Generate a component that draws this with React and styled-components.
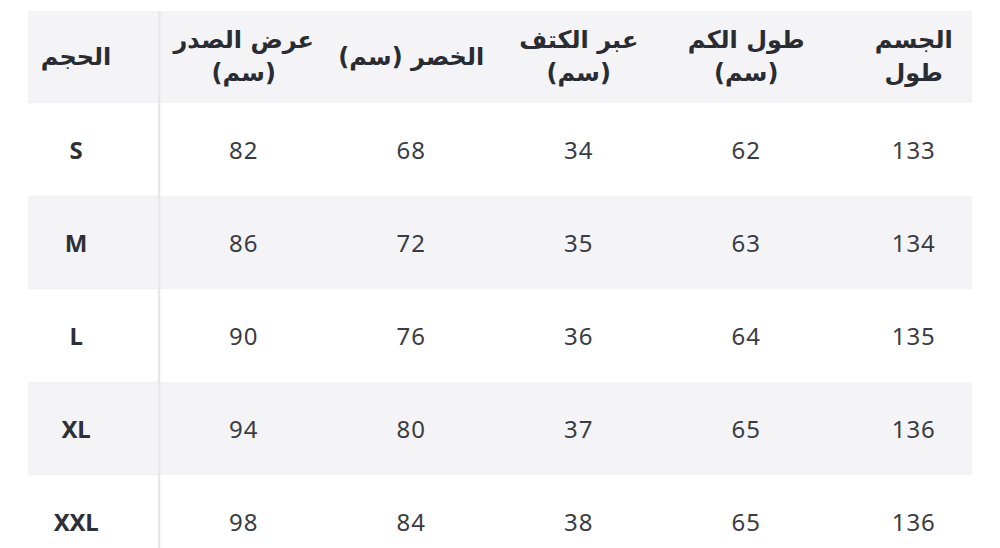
import styled, { createGlobalStyle } from "styled-components";

const COLUMNS = [
  ["عرض الصدر", "(سم)"],
  ["الخصر (سم)"],
  ["عبر الكتف", "(سم)"],
  ["طول الكم", "(سم)"],
  ["الجسم", "طول"],
];

const SIZES = [
  { size: "S", values: [82, 68, 34, 62, 133] },
  { size: "M", values: [86, 72, 35, 63, 134] },
  { size: "L", values: [90, 76, 36, 64, 135] },
  { size: "XL", values: [94, 80, 37, 65, 136] },
  { size: "XXL", values: [98, 84, 38, 65, 136] },
];

function App() {
  return (
    <>
      <GlobalStyle />
      <Page>
        <Scroller>
          <Row $shaded $head>
            <SizeCell>
              <HeadText dir="rtl">الحجم</HeadText>
            </SizeCell>
            {COLUMNS.map((lines, i) => (
              <Cell key={i}>
                <HeadText dir="rtl">
                  {lines.map((line, j) => (
                    <Line key={j}>{line}</Line>
                  ))}
                </HeadText>
              </Cell>
            ))}
          </Row>
          {SIZES.map((row, index) => (
            <Row key={row.size} $shaded={index % 2 === 1}>
              <SizeCell>
                <SizeLabel>{row.size}</SizeLabel>
              </SizeCell>
              {row.values.map((value, i) => (
                <Cell key={i}>
                  <Value>{value}</Value>
                </Cell>
              ))}
            </Row>
          ))}
        </Scroller>
      </Page>
    </>
  );
}

const GlobalStyle = createGlobalStyle`
  html, body {
    margin: 0;
    background: #ffffff;
    font-family: "Noto Sans", "DejaVu Sans", sans-serif;
    overflow: hidden;
  }
`;

const Page = styled.div`
  padding: 11px 28px 0;
  height: 548px;
  box-sizing: border-box;
`;

const Scroller = styled.div`
  width: 944px;
  overflow: hidden;
`;

const Row = styled.div`
  display: grid;
  grid-template-columns: 132px repeat(5, 167.5px);
  width: 969.5px;
  height: ${({ $head }) => ($head ? "92px" : "93px")};
  background: ${({ $shaded }) => ($shaded ? "#f4f4f6" : "#ffffff")};
`;

const Cell = styled.div`
  display: flex;
  align-items: center;
  justify-content: center;
  text-align: center;
`;

const SizeCell = styled(Cell)`
  padding-right: 34px;
  border-right: 2px solid #e8e8eb;
  box-shadow: 1px 0 3px rgba(0, 0, 0, 0.04);
  box-sizing: border-box;
`;

const HeadText = styled.div`
  font-family: "DejaVu Sans", "Noto Sans", sans-serif;
  font-weight: 700;
  font-size: 24px;
  line-height: 33px;
  color: #2a2c33;
  text-align: center;
`;

const Line = styled.div`
  white-space: nowrap;
`;

const SizeLabel = styled.span`
  font-weight: 700;
  font-size: 24px;
  color: #2e3037;
  letter-spacing: -0.3px;
`;

const Value = styled.span`
  font-weight: 400;
  font-size: 24px;
  letter-spacing: 1px;
  color: #3a3c43;
`;

export default App;
